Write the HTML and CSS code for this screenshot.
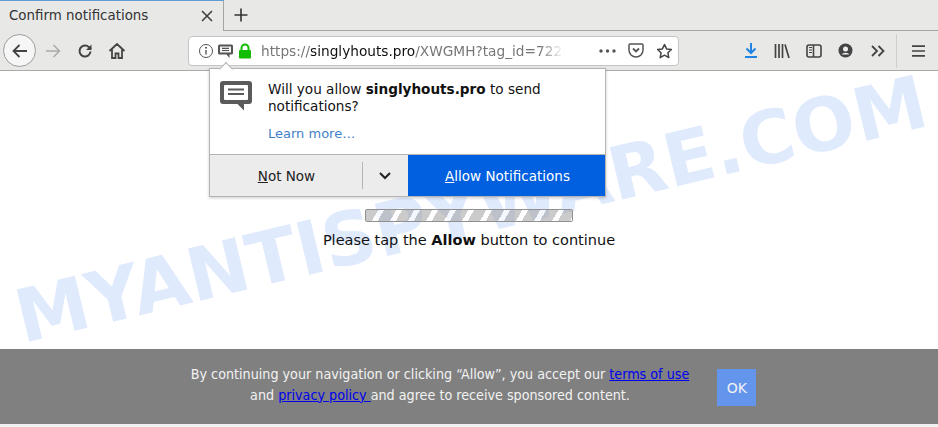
FILE: index.html
```html
<!DOCTYPE html>
<html lang="en">
<head>
  <meta charset="UTF-8" />
  <title>Confirm notifications</title>
  <link rel="stylesheet" href="styles.css">
</head>
<body>
  <div class="tabstrip">
    <div class="tab">
      <span class="tab-title">Confirm notifications</span>
      <svg class="tab-close" width="12" height="12" viewBox="0 0 12 12"><path d="M1 1l10 10M11 1L1 11" stroke="#3c3c3c" stroke-width="1.5" fill="none"/></svg>
    </div>
    <svg class="new-tab" width="16" height="16" viewBox="0 0 16 16"><path d="M8 1.500v13M1.500 8h13" stroke="#333" stroke-width="1.600" fill="none"/></svg>
  </div>

  <div class="toolbar">
    <div class="back-btn">
      <svg width="18" height="18" viewBox="0 0 18 18"><path d="M16 9H2.500M8.500 3l-6 6 6 6" stroke="#444" stroke-width="1.800" fill="none"/></svg>
    </div>
    <svg class="tool fwd" width="18" height="18" viewBox="0 0 18 18"><path d="M2 9h13.500M9.500 3l6 6-6 6" stroke="#aaa" stroke-width="1.500" fill="none"/></svg>
    <svg class="tool reload" width="16" height="16" viewBox="0 0 16 16"><path d="M13.500 8.500a5.500 5.500 0 1 1-1.600-4.400L14 6" stroke="#444" stroke-width="2" fill="none"/><path d="M14.500 1.500v5.500H9z" fill="#444"/></svg>
    <svg class="tool home" width="18" height="18" viewBox="0 0 18 18"><path d="M1.500 9L9 2l7.500 7M4 7.500V16h3.500v-4.500h3V16H14V7.500" stroke="#444" stroke-width="1.800" fill="none"/></svg>

    <div class="urlbar">
      <svg width="16" height="16" viewBox="0 0 16 16"><circle cx="8" cy="8" r="6.500" stroke="#555" fill="none"/><path d="M8 7v4.500" stroke="#555" stroke-width="1.400"/><circle cx="8" cy="4.800" r="1" fill="#555"/></svg>
      <svg class="url-msg" width="17" height="17" viewBox="0 0 17 17"><path d="M2.500 1.500h12a1.500 1.500 0 0 1 1.500 1.500v7a1.500 1.500 0 0 1-1.500 1.500h-2v3.500l-3-3.500h-7A1.500 1.500 0 0 1 1 10V3a1.500 1.500 0 0 1 1.500-1.500z" fill="#555"/><path d="M3 3.500h11v6H3z" fill="#f4f4f4"/><path d="M5 5.300h7M5 7.500h7" stroke="#555" stroke-width="1.200"/></svg>
      <svg class="url-lock" width="14" height="16" viewBox="0 0 14 16"><path d="M3.500 7V5a3.500 3.500 0 0 1 7 0v2" stroke="#12bc00" stroke-width="2" fill="none"/><rect x="1" y="7" width="12" height="8.500" rx="1" fill="#12bc00"/></svg>
      <span class="url-text">https://<b>singlyhouts.pro</b>/XWGMH?tag_id=7228</span>
      <div class="url-actions">
        <svg width="17" height="4" viewBox="0 0 17 4"><circle cx="2" cy="2" r="1.700" fill="#555"/><circle cx="8.500" cy="2" r="1.700" fill="#555"/><circle cx="15" cy="2" r="1.700" fill="#555"/></svg>
        <svg width="16" height="15" viewBox="0 0 16 15"><path d="M2.200 1h11.600A1.200 1.200 0 0 1 15 2.200V7a7 7 0 0 1-14 0V2.200A1.200 1.200 0 0 1 2.200 1z" stroke="#555" stroke-width="1.500" fill="none"/><path d="M5 5.500l3 3 3-3" stroke="#555" stroke-width="1.800" fill="none"/></svg>
        <svg width="17" height="16" viewBox="0 0 17 16"><path d="M8.500 1.500l2.100 4.400 4.800.6-3.500 3.300.9 4.800-4.300-2.400-4.300 2.400.9-4.800-3.500-3.300 4.800-.6z" stroke="#444" stroke-width="1.500" fill="none" stroke-linejoin="round"/></svg>
      </div>
    </div>

    <div class="tool-group">
      <svg width="14" height="15" viewBox="0 0 14 15"><path d="M7 0v9.500M2.500 5.500L7 10l4.500-4.500" stroke="#1f84e2" stroke-width="2" fill="none"/><path d="M1 14h12" stroke="#1f84e2" stroke-width="2"/></svg>
      <svg width="16" height="14" viewBox="0 0 16 14"><path d="M1.500 0v14M5 0v14M8.500 0v14M11 .5l4 13.500" stroke="#444" stroke-width="1.700" fill="none"/></svg>
      <svg width="16" height="14" viewBox="0 0 16 14"><rect x="1" y="1" width="14" height="12" rx="2" stroke="#444" stroke-width="1.600" fill="none"/><path d="M3 3.500h3M3 6h3M3 8.500h3" stroke="#444" stroke-width="1.200"/><path d="M7.500 1v12" stroke="#444" stroke-width="1.600"/></svg>
      <svg width="15" height="15" viewBox="0 0 15 15"><circle cx="7.500" cy="7.500" r="7" fill="#444"/><circle cx="7.500" cy="6" r="2.500" fill="#eee"/><path d="M3.500 11.500a4.500 3 0 0 1 8 0z" fill="#eee"/></svg>
      <svg class="overflow" width="14" height="12" viewBox="0 0 14 12"><path d="M1 1l5 5-5 5M7.500 1l5 5-5 5" stroke="#444" stroke-width="1.800" fill="none"/></svg>
    </div>
    <div class="menu-sep"></div>
    <svg class="menu-icon" width="13" height="12" viewBox="0 0 13 12"><path d="M0 1.200h13M0 6h13M0 10.800h13" stroke="#444" stroke-width="1.700"/></svg>
  </div>

  <main class="page">
    <div class="watermark-clip">
      <div class="watermark">MYANTISPYWARE.COM</div>
    </div>

    <div class="popup">
      <div class="popup-arrow"></div>
      <div class="popup-body">
        <svg class="popup-icon" width="34" height="31" viewBox="0 0 34 31"><path d="M4 1h26a3 3 0 0 1 3 3v17a3 3 0 0 1-3 3h-5v6.500L18.500 24H4a3 3 0 0 1-3-3V4a3 3 0 0 1 3-3z" fill="#5a5a5a"/><rect x="5" y="5" width="24" height="15" rx="1" fill="#fff"/><path d="M9 9.500h16M9 14h16" stroke="#5a5a5a" stroke-width="2"/></svg>
        <div class="popup-text">
          <p>Will you allow <b>singlyhouts.pro</b> to send notifications?</p>
          <a class="learn" href="#">Learn more…</a>
        </div>
      </div>
      <div class="popup-buttons">
        <div class="btn-notnow"><span><u>N</u>ot Now</span></div>
        <div class="btn-drop">
          <svg width="12" height="8" viewBox="0 0 12 8"><path d="M1 1l5 5 5-5" stroke="#222" stroke-width="2" fill="none"/></svg>
        </div>
        <div class="btn-allow"><span><u>A</u>llow Notifications</span></div>
      </div>
    </div>

    <div class="progress"></div>
    <p class="tap-text">Please tap the <b>Allow</b> button to continue</p>
  </main>

  <div class="banner">
    <p>By continuing your navigation or clicking “Allow”, you accept our <a href="#">terms of use</a><br>and <a href="#">privacy policy </a>and agree to receive sponsored content.</p>
    <div class="ok">OK</div>
  </div>
  <div class="bottom-strip"></div>
</body>
</html>
```

FILE: styles.css
```css
html, body {
  margin: 0;
  height: 427px;
  overflow: hidden;
}

body {
  font-family: "DejaVu Sans", sans-serif;
  background-color: #fff;
  color: #111;
}

.tabstrip {
  display: flex;
  align-items: center;
  height: 31px;
  background-color: #e8e8e7;
  border-bottom: 1px solid #a5a5a5;
  box-sizing: border-box;
}

.tab {
  display: flex;
  align-items: center;
  justify-content: space-between;
  width: 224px;
  height: 31px;
  padding: 0 10px 0 9px;
  box-sizing: border-box;
  background-color: #e8e8e7;
  border-top: 1px solid #5f9bd6;
  border-right: 1px solid #a5a5a5;
  font-size: 13.4px;
  color: #333;
}

.new-tab {
  margin-left: 9px;
}

.toolbar {
  display: flex;
  align-items: center;
  height: 40px;
  background-color: #e8e8e7;
  border-bottom: 1px solid #a9a9a9;
  box-sizing: border-box;
}

.back-btn {
  display: flex;
  align-items: center;
  justify-content: center;
  width: 33px;
  height: 33px;
  margin-left: 3px;
  border: 1px solid #9c9c9c;
  border-radius: 50%;
  background-color: #f6f6f6;
  box-sizing: border-box;
}

.fwd {
  margin-left: 8px;
}

.reload {
  margin-left: 15px;
}

.home {
  margin-left: 15px;
}

.urlbar {
  display: flex;
  align-items: center;
  width: 491px;
  height: 30px;
  margin-left: 62px;
  padding: 0 5px 0 9px;
  background-color: #fff;
  border: 1px solid #c4c4c4;
  border-radius: 4px;
  box-sizing: border-box;
}

.url-msg {
  margin-left: 3px;
  margin-top: 2px;
}

.url-lock {
  margin-left: 4px;
}

.url-text {
  width: 303px;
  margin-left: 9px;
  overflow: hidden;
  white-space: nowrap;
  font-size: 13.7px;
  color: #777;
  -webkit-mask-image: linear-gradient(to right, #000 92%, transparent);
  mask-image: linear-gradient(to right, #000 92%, transparent);
}

.url-text b {
  font-weight: normal;
  color: #111;
}

.url-actions {
  display: flex;
  align-items: center;
  gap: 12px;
  margin-left: auto;
}

.tool-group {
  display: flex;
  align-items: center;
  gap: 16px;
  margin-left: 65px;
}

.overflow {
  margin-left: 2px;
}

.menu-sep {
  width: 1px;
  height: 34px;
  margin-left: 11px;
  background-color: #cfcfcf;
}

.menu-icon {
  margin-left: 15px;
}

.page {
  position: relative;
  height: 278px;
  display: flex;
  flex-direction: column;
  align-items: center;
  padding-top: 138px;
  box-sizing: border-box;
  background-color: #fff;
}

.watermark-clip {
  position: absolute;
  inset: 0;
  overflow: hidden;
}

.watermark {
  position: absolute;
  left: -29px;
  top: 96px;
  width: 1000px;
  text-align: center;
  transform: rotate(-13.5deg);
  font-size: 73.5px;
  font-weight: bold;
  white-space: nowrap;
  color: #dfeafd;
}

.popup {
  position: absolute;
  left: 209px;
  top: -3px;
  width: 397px;
  background-color: #fff;
  border: 1px solid #b4b4b4;
  box-sizing: border-box;
  box-shadow: 0 1px 3px rgba(0, 0, 0, 0.2);
}

.popup-arrow {
  position: absolute;
  left: 11px;
  top: -5px;
  width: 9px;
  height: 9px;
  background-color: #fff;
  border-top: 1px solid #b4b4b4;
  border-left: 1px solid #b4b4b4;
  transform: rotate(45deg);
}

.popup-body {
  display: flex;
  gap: 15px;
  height: 85px;
  padding: 11px 10px 0 9px;
  box-sizing: border-box;
}

.popup-text {
  padding-top: 1px;
}

.popup-text p {
  margin: 0;
  font-size: 13.6px;
  line-height: 17px;
  width: 300px;
}

.learn {
  display: block;
  margin-top: 11px;
  font-size: 13px;
  color: #3f7fc8;
  text-decoration: none;
}

.popup-buttons {
  display: flex;
  height: 41px;
  font-size: 13.5px;
  border-top: 1px solid #b4b4b4;
}

.btn-notnow {
  display: flex;
  align-items: center;
  justify-content: center;
  width: 152px;
  padding-left: 1px;
  box-sizing: border-box;
  background-color: #ececec;
  color: #222;
}

.btn-drop {
  display: flex;
  align-items: center;
  justify-content: center;
  width: 46px;
  background-color: #ececec;
  position: relative;
}

.btn-drop::before {
  content: "";
  position: absolute;
  left: 0;
  top: 7px;
  bottom: 7px;
  width: 1px;
  background-color: #b5b5b5;
}

.btn-allow {
  display: flex;
  align-items: center;
  justify-content: center;
  flex: 1;
  padding-left: 2px;
  background-color: #0060df;
  color: #fff;
}

.progress {
  position: relative;
  width: 208px;
  height: 13px;
  border: 1px solid #909090;
  border-radius: 2px;
  box-sizing: border-box;
  background: repeating-linear-gradient(120deg, rgba(160, 160, 160, 0.55) 0, rgba(160, 160, 160, 0.55) 10.6px, rgba(255, 255, 255, 0.65) 10.6px, rgba(255, 255, 255, 0.65) 15.6px);
}

.tap-text {
  position: relative;
  margin: 9px 0 0;
  font-size: 14.5px;
  line-height: 18px;
  color: #111;
}

.banner {
  display: flex;
  align-items: center;
  justify-content: center;
  gap: 28px;
  height: 75px;
  padding-left: 9px;
  background-color: #808080;
  color: #f2f2f2;
  box-sizing: border-box;
}

.banner p {
  margin: 0 0 4px;
  font-family: "DejaVu Sans Condensed", "DejaVu Sans", sans-serif;
  font-stretch: condensed;
  font-size: 14.2px;
  line-height: 21px;
  text-align: center;
}

.banner a {
  color: #0000ee;
}

.ok {
  display: flex;
  align-items: center;
  justify-content: center;
  width: 39px;
  height: 37px;
  margin-top: 2px;
  background-color: #6495ed;
  font-size: 14px;
  color: #f2f2f2;
}

.bottom-strip {
  height: 3px;
  background-color: #f1f1f1;
}
```
